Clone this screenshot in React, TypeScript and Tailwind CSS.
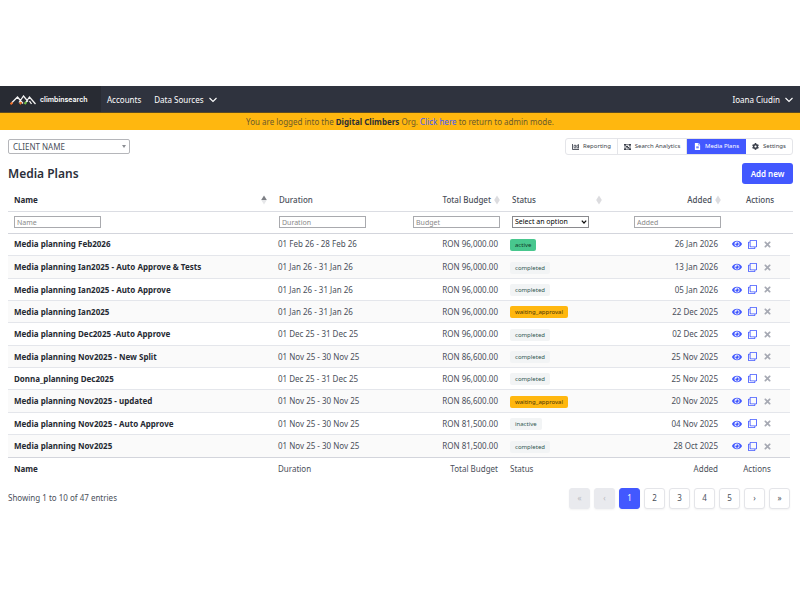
import { FaCog, FaEye, FaFileAlt, FaRegClone, FaTimes } from "react-icons/fa";

type Status = "active" | "inactive" | "completed" | "waiting_approval";

type Plan = {
  name: string;
  duration: string;
  budget: string;
  status: Status;
  added: string;
};

const PLANS: Plan[] = [
  { name: "Media planning Feb2026", duration: "01 Feb 26 - 28 Feb 26", budget: "RON 96,000.00", status: "active", added: "26 Jan 2026" },
  { name: "Media planning Ian2025 - Auto Approve & Tests", duration: "01 Jan 26 - 31 Jan 26", budget: "RON 96,000.00", status: "completed", added: "13 Jan 2026" },
  { name: "Media planning Ian2025 - Auto Approve", duration: "01 Jan 26 - 31 Jan 26", budget: "RON 96,000.00", status: "completed", added: "05 Jan 2026" },
  { name: "Media planning Ian2025", duration: "01 Jan 26 - 31 Jan 26", budget: "RON 96,000.00", status: "waiting_approval", added: "22 Dec 2025" },
  { name: "Media planning Dec2025 -Auto Approve", duration: "01 Dec 25 - 31 Dec 25", budget: "RON 96,000.00", status: "completed", added: "02 Dec 2025" },
  { name: "Media planning Nov2025 - New Split", duration: "01 Nov 25 - 30 Nov 25", budget: "RON 86,600.00", status: "completed", added: "25 Nov 2025" },
  { name: "Donna_planning Dec2025", duration: "01 Dec 25 - 31 Dec 25", budget: "RON 96,000.00", status: "completed", added: "25 Nov 2025" },
  { name: "Media planning Nov2025 - updated", duration: "01 Nov 25 - 30 Nov 25", budget: "RON 86,600.00", status: "waiting_approval", added: "20 Nov 2025" },
  { name: "Media planning Nov2025 - Auto Approve", duration: "01 Nov 25 - 30 Nov 25", budget: "RON 81,500.00", status: "inactive", added: "04 Nov 2025" },
  { name: "Media planning Nov2025", duration: "01 Nov 25 - 30 Nov 25", budget: "RON 81,500.00", status: "completed", added: "28 Oct 2025" },
];

const STATUS_STYLES: Record<Status, string> = {
  active: "bg-[#48c78e] text-[#123a29]",
  inactive: "bg-[#f2f4f5] text-[#2f5450]",
  completed: "bg-[#f2f4f5] text-[#2f5450]",
  waiting_approval: "bg-[#ffb70f] text-[#4a3608]",
};

function Logo() {
  return (
    <svg viewBox="0 0 26 10" className="h-[10px] w-[26px]" fill="none" strokeWidth="1.3">
      <path d="M1.500 8 7.500 2 13 8.500M9 7.500 13.500 1 18 6.500M15 8.500 19.500 2 25.500 9M19.500 6l2 3" stroke="#f4f4f4" />
      <path d="M.5 9.200 2.500 7.400M9.800 9.200l1.600-2" stroke="#f0702a" strokeWidth="2" />
      <path d="M14.600 9l1.800-2" stroke="#6fbf44" strokeWidth="2" />
    </svg>
  );
}

function Chevron() {
  return (
    <svg viewBox="0 0 8 6" className="h-[6px] w-[8px]" fill="none" stroke="currentColor" strokeWidth="1.1">
      <path d="M.5 1 4 4.500 7.500 1" />
    </svg>
  );
}

function SortIcon({ sorted = false }: { sorted?: boolean }) {
  return (
    <svg viewBox="0 0 6 10" className="h-[10px] w-[6px] shrink-0">
      <path d="M3 .5 5.800 5H.2z" fill={sorted ? "#7d7f85" : "#dcdcdf"} />
      <path d="M3 9.500 .2 5h5.600z" fill={sorted ? "#e6e7e9" : "#dcdcdf"} />
    </svg>
  );
}

function ReportIcon() {
  return (
    <svg viewBox="0 0 14 12" className="h-[6px] w-[7px]" fill="none" stroke="currentColor" strokeWidth="1.7">
      <path d="M1 0v11h13M4.500 9V5M7.500 9V3.500M10.500 9V5M13 9V1M3 4l3-2 3 2 4-3" />
    </svg>
  );
}

function AnalyticsIcon() {
  return (
    <svg viewBox="0 0 14 12" className="h-[6px] w-[7px]" fill="none" stroke="currentColor" strokeWidth="1.6">
      <path d="M2 1.500h10v9H2z" />
      <path d="M0 0h4v3H0zM10 0h4v3h-4zM0 9h4v3H0zM10 9h4v3h-4zM4 4h4v3H4zM7 6h3v3H7z" fill="currentColor" stroke="none" />
    </svg>
  );
}

const TABS = [
  { label: "Reporting", icon: <ReportIcon />, width: "w-[52px]" },
  { label: "Search Analytics", icon: <AnalyticsIcon />, width: "w-[69px]" },
  { label: "Media Plans", icon: <FaFileAlt size={7} />, width: "w-[59px]", active: true },
  { label: "Settings", icon: <FaCog size={7} />, width: "w-[46px]" },
];

const PAGES = ["«", "‹", "1", "2", "3", "4", "5", "›", "»"];

function pageStyle(page: string) {
  if (page === "1") return "border-[#4258ff] bg-[#4258ff] text-white";
  if (page === "«" || page === "‹") return "border-[#e9eaee] bg-[#e9eaee] text-[#b9bbc2]";
  return "border-[#e4e5e9] bg-white text-[#4a4f5a]";
}

function Navbar() {
  return (
    <nav className="flex h-[27px] items-stretch border-b border-[#5b4a22] bg-[#2f333e] text-[8px] text-white">
      <a href="#" className="flex w-[101px] items-center gap-[4px] bg-[#282b33] pl-[10px] pt-[2px]">
        <Logo />
        <span className="font-['Inter',sans-serif] text-[7px] font-semibold">climbinsearch</span>
      </a>
      <a href="#" className="flex items-center pl-[6px] pt-[2px]">Accounts</a>
      <button className="flex items-center gap-[5px] pl-[13px] pt-[2px]">
        Data Sources <Chevron />
      </button>
      <button className="ml-auto flex items-center gap-[5px] pr-[7px] pt-[2px]">
        Ioana Ciudin <Chevron />
      </button>
    </nav>
  );
}

function Toolbar() {
  return (
    <div className="flex items-start justify-between">
      <div className="relative mt-px">
        <select aria-label="Client" className="block h-[15px] w-[122px] appearance-none rounded-[2px] border border-[#b5b6ba] bg-white pl-[4px] text-[8px] leading-[13px] text-[#4a4f5a]">
          <option>CLIENT NAME</option>
        </select>
        <span className="pointer-events-none absolute right-[4px] top-[6px] border-x-[2px] border-t-[3px] border-x-transparent border-t-[#8b8d93]" />
      </div>
      <div className="flex h-[17px] overflow-hidden rounded-[3px] border border-[#e4e5e9]">
        {TABS.map((tab) => (
          <button
            key={tab.label}
            className={`flex items-center justify-center gap-[4px] whitespace-nowrap text-[6px] ${tab.width} ${
              tab.active ? "bg-[#4258ff] text-white" : "border-r border-[#e4e5e9] text-[#3a3f4a] last:border-r-0"
            }`}
          >
            {tab.icon}
            {tab.label}
          </button>
        ))}
      </div>
    </div>
  );
}

function Columns({ body = false }: { body?: boolean }) {
  return (
    <colgroup>
      <col />
      <col className="w-[110px]" />
      <col className={body ? "w-[122px]" : "w-[123px]"} />
      <col className={body ? "w-[101px]" : "w-[102px]"} />
      <col className="w-[119px]" />
      <col className="w-[66px]" />
    </colgroup>
  );
}

const FILTER = "block h-[12px] w-[87px] border border-[#a9aaae] bg-white px-[2px] text-[7px] leading-[10px] placeholder:text-[#8a8a8a]";

function TableHead() {
  return (
    <table className="w-full table-fixed border-collapse text-left text-[8px]">
      <Columns />
      <thead>
        <tr className="h-[21px] border-b border-[#dbdde3]">
          <th className="px-[6px] font-bold text-[#262a33]">
            <div className="flex items-center justify-between">Name <SortIcon sorted /></div>
          </th>
          <th className="px-[6px] font-medium">Duration</th>
          <th className="px-[6px] font-medium">
            <div className="flex items-center justify-end gap-[3px]">Total Budget <SortIcon /></div>
          </th>
          <th className="px-[6px] font-medium">
            <div className="flex items-center justify-between">Status <SortIcon /></div>
          </th>
          <th className="px-[6px] font-medium">
            <div className="flex items-center justify-end gap-[3px]">Added <SortIcon /></div>
          </th>
          <th className="text-center font-medium">Actions</th>
        </tr>
        <tr className="h-[22px] border-b border-[#d3d5dc]">
          <td className="px-[6px]"><input aria-label="Filter by name" placeholder="Name" className={FILTER} /></td>
          <td className="px-[6px]"><input aria-label="Filter by duration" placeholder="Duration" className={FILTER} /></td>
          <td className="px-[6px]"><input aria-label="Filter by budget" placeholder="Budget" className={`${FILTER} ml-auto`} /></td>
          <td className="px-[6px]">
            <div className="relative w-[77px]">
              <select aria-label="Filter by status" className="block h-[12px] w-full appearance-none border border-[#8a8a8e] bg-white pl-[2px] text-[7px] leading-[10px] text-black">
                <option>Select an option</option>
              </select>
              <svg viewBox="0 0 6 4" className="pointer-events-none absolute right-[2px] top-[4px] h-[4px] w-[6px]" fill="none" stroke="#111" strokeWidth="1.2">
                <path d="M.8 .6 3 3 5.200 .6" />
              </svg>
            </div>
          </td>
          <td className="px-[6px]"><input aria-label="Filter by date added" placeholder="Added" className={`${FILTER} ml-auto`} /></td>
          <td />
        </tr>
      </thead>
    </table>
  );
}

function PlanRow({ plan }: { plan: Plan }) {
  return (
    <tr className="h-[22px] border-b border-[#e4e6eb] last:h-[23px] last:border-[#d3d5dc] even:bg-[#fafafa] nth-[3n+2]:h-[23px]">
      <th scope="row" className="px-[6px] font-bold text-[#262a33]">{plan.name}</th>
      <td className="px-[6px]">{plan.duration}</td>
      <td className="px-[6px] text-right">{plan.budget}</td>
      <td className="px-[6px]">
        <span className={`mt-px flex h-[12px] w-fit items-center rounded-[2px] px-[5px] pt-px text-[6px] ${STATUS_STYLES[plan.status]}`}>
          {plan.status}
        </span>
      </td>
      <td className="px-[6px] text-right">{plan.added}</td>
      <td>
        <div className="flex items-center gap-[6px] pl-[8px]">
          <button aria-label={`View ${plan.name}`} className="text-[#4258ff]"><FaEye size={10} /></button>
          <button aria-label={`Duplicate ${plan.name}`} className="text-[#4258ff]"><FaRegClone size={9} /></button>
          <button aria-label={`Delete ${plan.name}`} className="text-[#a6a9b3]"><FaTimes size={9} /></button>
        </div>
      </td>
    </tr>
  );
}

function TableBody() {
  return (
    <div className="pr-[3px]">
      <table className="w-full table-fixed border-collapse text-left text-[8px]">
        <Columns body />
        <tbody>
          {PLANS.map((plan) => (
            <PlanRow key={plan.name} plan={plan} />
          ))}
        </tbody>
        <tfoot>
          <tr className="h-[22px]">
            <th className="px-[6px] font-bold text-[#262a33]">Name</th>
            <td className="px-[6px]">Duration</td>
            <td className="px-[6px] text-right">Total Budget</td>
            <td className="px-[6px]">Status</td>
            <td className="px-[6px] text-right">Added</td>
            <td className="text-center">Actions</td>
          </tr>
        </tfoot>
      </table>
    </div>
  );
}

export default function App() {
  return (
    <div className="min-h-screen bg-white pt-[86px] font-['Noto_Sans',sans-serif] text-[#4a4f5a]">
      <Navbar />
      <p className="h-[17px] bg-[#ffb70f] text-center text-[8px] leading-[17px] text-[#6b5a2c]">
        You are logged into the <strong className="font-bold text-[#2b2e36]">Digital Climbers</strong> Org.{" "}
        <a href="#" className="text-[#4258ff]">Click here</a> to return to admin mode.
      </p>
      <main className="pl-[8px] pr-[7px] pt-[8px]">
        <Toolbar />
        <div className="mt-[8px] flex h-[21px] items-center justify-between">
          <h1 className="text-[12px] font-semibold text-[#2b2f3a]">Media Plans</h1>
          <button className="h-[21px] w-[51px] rounded-[3px] bg-[#4258ff] text-[8px] font-semibold text-white">Add new</button>
        </div>
        <div className="mt-[6px]">
          <TableHead />
          <TableBody />
        </div>
        <div className="mt-[8px] flex items-center justify-between pr-[3px]">
          <p className="text-[8px]">Showing 1 to 10 of 47 entries</p>
          <div className="flex gap-[4px]">
            {PAGES.map((page) => (
              <button
                key={page}
                disabled={page === "«" || page === "‹"}
                className={`h-[21px] w-[21px] rounded-[3px] border text-[8px] shadow-xs ${pageStyle(page)}`}
              >
                {page}
              </button>
            ))}
          </div>
        </div>
      </main>
    </div>
  );
}
